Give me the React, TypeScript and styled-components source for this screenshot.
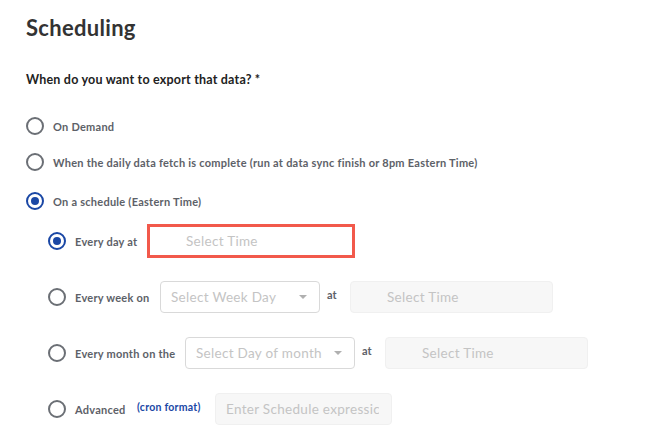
import React from "react";
import styled, { createGlobalStyle } from "styled-components";

const Global = createGlobalStyle`
  body { margin: 0; background: #fff; font-family: Lato, "Noto Sans", sans-serif; }
`;

const Page = styled.div`
  padding: 14px 0 0 26px;
`;
const Title = styled.h1`
  margin: 0;
  font-size: 22px;
  font-weight: 700;
  color: #333;
  line-height: 28px;
  letter-spacing: 0.3px;
`;
const Question = styled.div`
  margin-top: 30px;
  font-size: 12.5px;
  font-weight: 700;
  color: #222;
  line-height: 16px;
  letter-spacing: 0.2px;
`;
const Row = styled.div<{ $indent?: number; $h: number; $mt: number }>`
  display: flex;
  align-items: center;
  margin-left: ${(p) => p.$indent ?? 0}px;
  height: ${(p) => p.$h}px;
  margin-top: ${(p) => p.$mt}px;
`;
const Radio = styled.span<{ $on?: boolean }>`
  box-sizing: border-box;
  width: 18px;
  height: 18px;
  border-radius: 50%;
  border: 2px solid ${(p) => (p.$on ? "#1a47a5" : "#6b6f75")};
  display: flex;
  align-items: center;
  justify-content: center;
  flex: none;
  &::after {
    content: "";
    display: ${(p) => (p.$on ? "block" : "none")};
    width: 8px;
    height: 8px;
    border-radius: 50%;
    background: #1a47a5;
  }
`;
const Label = styled.span<{ $w?: number }>`
  margin-left: 9px;
  font-size: 11px;
  font-weight: 700;
  color: #5d6168;
  white-space: nowrap;
  letter-spacing: 0.25px;
  ${(p) => (p.$w ? `width:${p.$w}px;` : "")}
`;
const Cron = styled.span`
  font-size: 10.5px;
  font-weight: 700;
  color: #1a47a5;
  width: 78px;
  margin-top: -4px;
  letter-spacing: 0.25px;
`;
const Field = styled.div<{ $w: number; $variant: "red" | "select" | "disabled" }>`
  box-sizing: border-box;
  width: ${(p) => p.$w}px;
  height: ${(p) => (p.$variant === "red" ? 34 : 32)}px;
  border-radius: ${(p) => (p.$variant === "red" ? 0 : 4)}px;
  border: ${(p) =>
    p.$variant === "red"
      ? "3px solid #f2594b"
      : p.$variant === "select"
      ? "1px solid #d9d9d9"
      : "1px solid #f0f0f0"};
  background: ${(p) => (p.$variant === "disabled" ? "#f7f7f7" : "#fff")};
  display: flex;
  align-items: center;
  padding-left: ${(p) => (p.$variant === "select" ? 10 : 36)}px;
  padding-right: 12px;
  font-size: 13.5px;
  letter-spacing: 0.3px;
  color: #c4c4c4;
  white-space: nowrap;
  overflow: hidden;
  flex: none;
`;
const Placeholder = styled.span`
  flex: 1;
  overflow: hidden;
`;
const Caret = styled.span`
  width: 0;
  height: 0;
  border-left: 4px solid transparent;
  border-right: 4px solid transparent;
  border-top: 4px solid #b0b0b0;
`;
const At = styled.span`
  width: 23px;
  font-size: 11px;
  font-weight: 700;
  color: #5d6168;
  margin: -6px 0 0 7px;
`;

export default function App() {
  return (
    <Page>
      <Global />
      <Title>Scheduling</Title>
      <Question>When do you want to export that data? *</Question>
      <Row $h={20} $mt={28}><Radio /><Label>On Demand</Label></Row>
      <Row $h={20} $mt={16}><Radio /><Label>When the daily data fetch is complete (run at data sync finish or 8pm Eastern Time)</Label></Row>
      <Row $h={20} $mt={19}><Radio $on /><Label>On a schedule (Eastern Time)</Label></Row>
      <Row $indent={22} $h={34} $mt={13}>
        <Radio $on /><Label $w={72}>Every day at</Label>
        <Field $w={208} $variant="red"><Placeholder>Select Time</Placeholder></Field>
      </Row>
      <Row $indent={22} $h={32} $mt={23}>
        <Radio /><Label $w={85}>Every week on</Label>
        <Field $w={160} $variant="select"><Placeholder>Select Week Day</Placeholder><Caret /></Field>
        <At>at</At>
        <Field $w={203} $variant="disabled"><Placeholder>Select Time</Placeholder></Field>
      </Row>
      <Row $indent={22} $h={32} $mt={24}>
        <Radio /><Label $w={110}>Every month on the</Label>
        <Field $w={170} $variant="select"><Placeholder>Select Day of month</Placeholder><Caret /></Field>
        <At>at</At>
        <Field $w={203} $variant="disabled"><Placeholder>Select Time</Placeholder></Field>
      </Row>
      <Row $indent={22} $h={32} $mt={24}>
        <Radio /><Label $w={62}>Advanced</Label>
        <Cron>(cron format)</Cron>
        <Field $w={177} $variant="disabled" style={{ paddingLeft: 10 }}><Placeholder>Enter Schedule expressic</Placeholder></Field>
      </Row>
    </Page>
  );
}
